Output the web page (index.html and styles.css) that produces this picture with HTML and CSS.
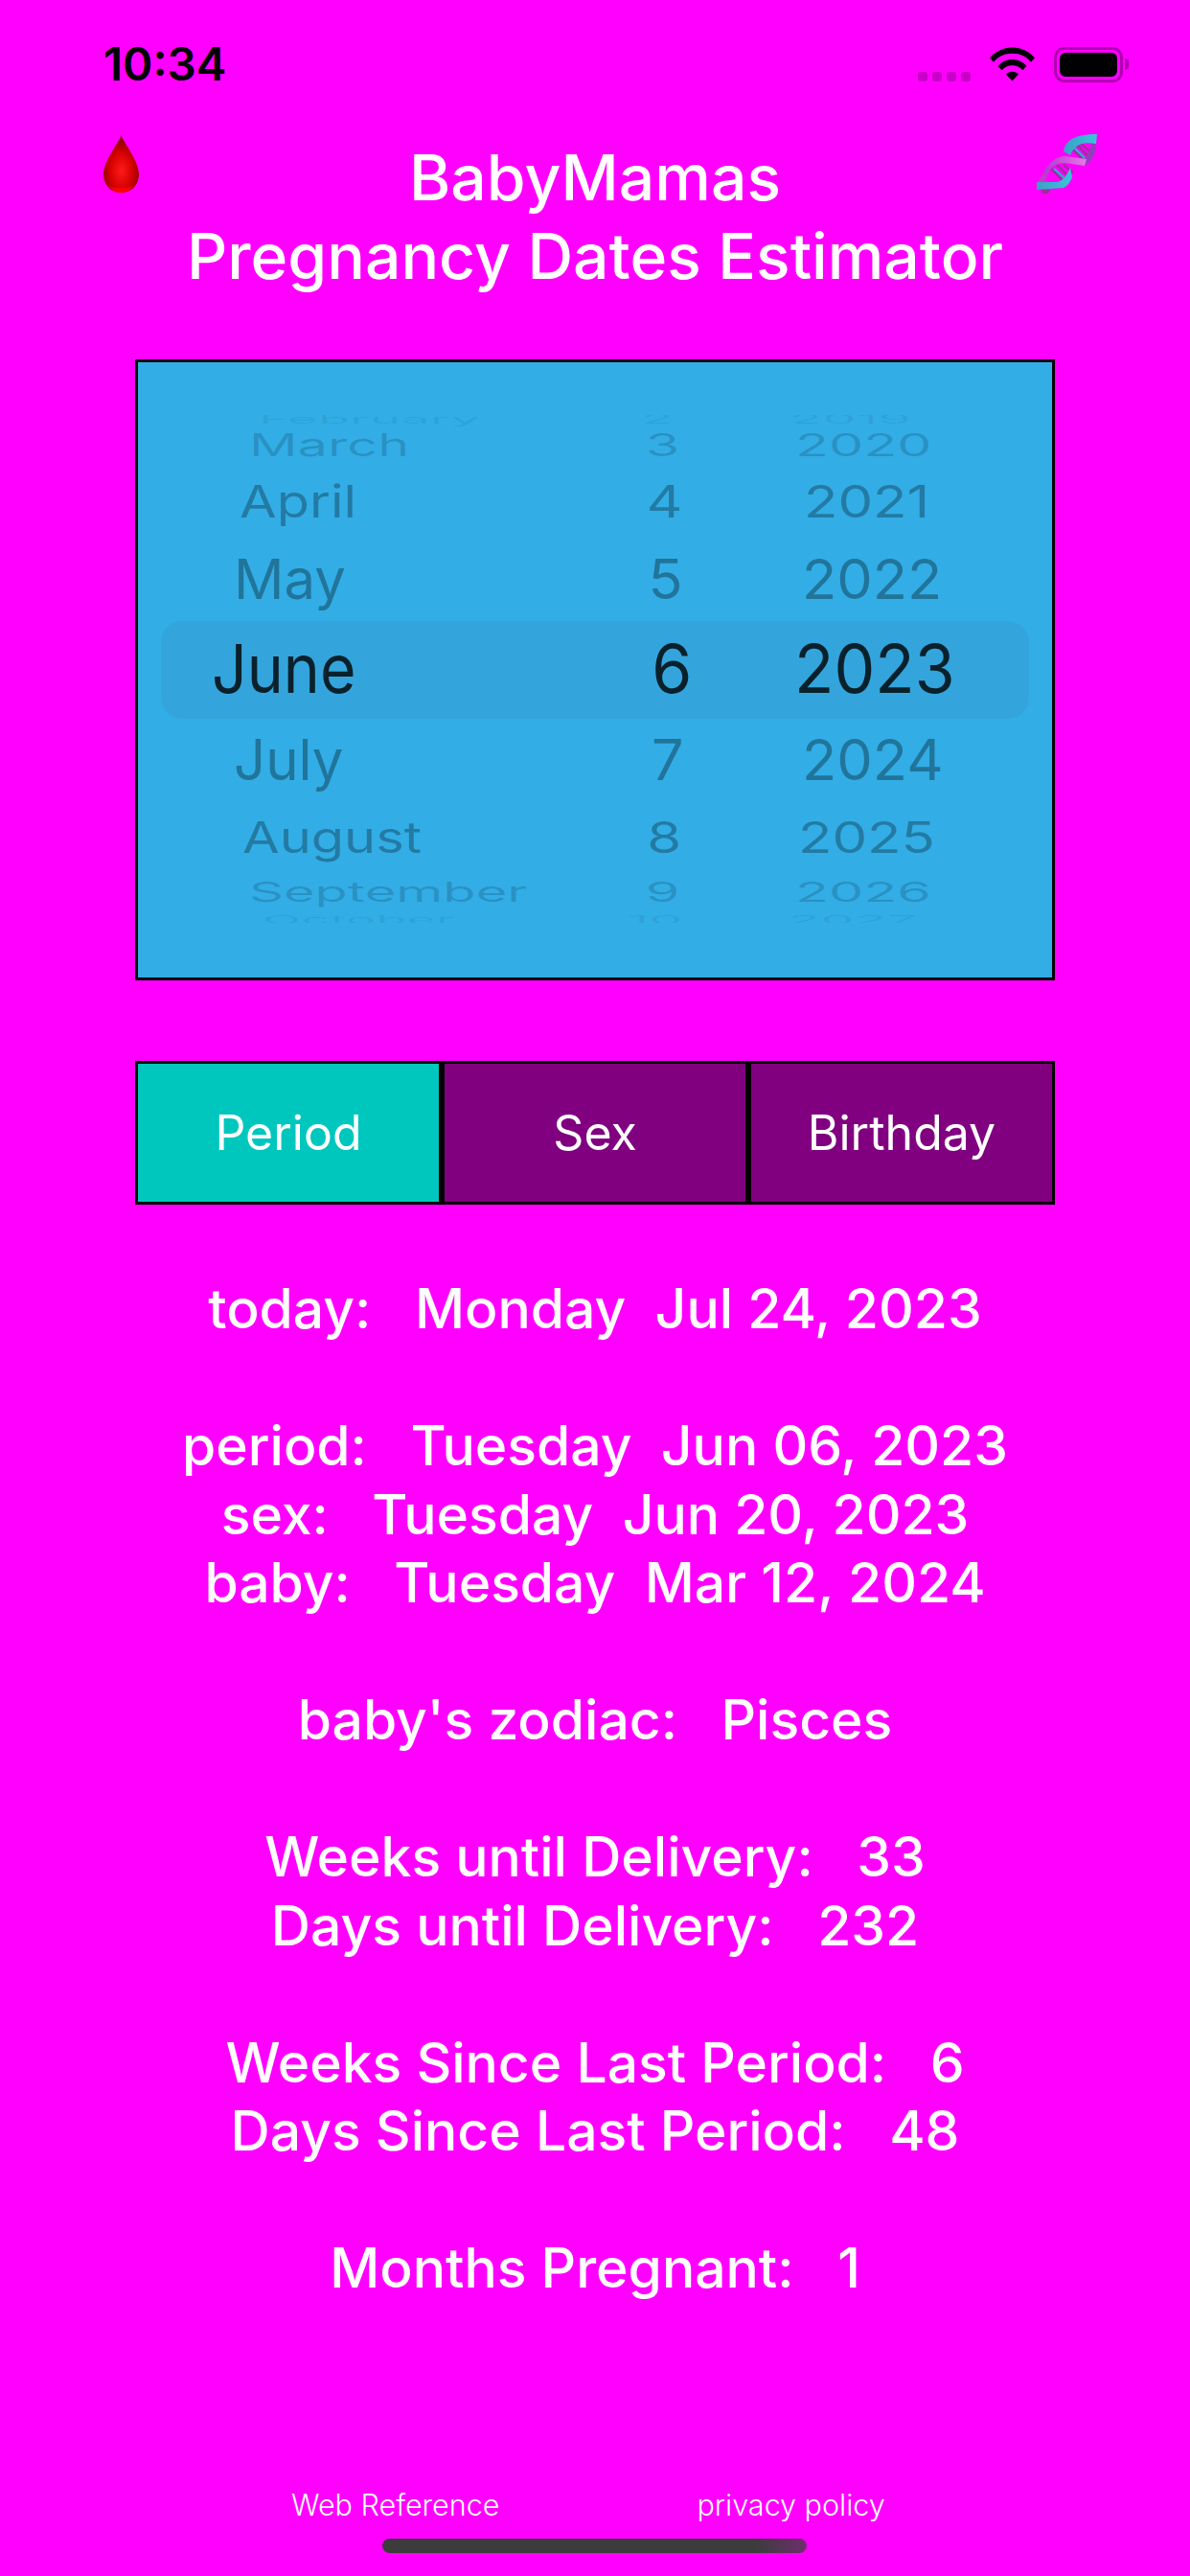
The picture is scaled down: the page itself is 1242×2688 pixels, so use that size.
FILE: index.html
```html
<!DOCTYPE html>
<html lang="en">
<head>
	<meta charset="UTF-8">
	<title>BabyMamas</title>
	<link rel="stylesheet" href="styles.css">
</head>
<body>
	<div class="page">
		<div class="statusbar">
			<span class="clock">10:34</span>
			<div class="status-icons">
				<div class="signal"><i></i><i></i><i></i><i></i></div>
				<svg class="wifi" width="47" height="36" viewBox="0 0 47 36">
					<path d="M0 11.5C6 4.5 14 0.5 23.5 0.5S41 4.5 47 11.5L43 15.7C38 10 31.500 6.800 23.500 6.800S9 10 4 15.700Z"/>
					<path d="M8.500 20C12.500 15.500 17.500 13 23.500 13S34.500 15.500 38.500 20L34.300 24.300C31.300 21 27.800 19.300 23.500 19.300S15.700 21 12.700 24.300Z"/>
					<path d="M17 28.500C18.800 26.700 21 25.700 23.500 25.700S28.200 26.700 30 28.500L23.500 35.500Z"/>
				</svg>
				<div class="battery"><div class="battery-fill"></div></div>
				<div class="battery-nub"></div>
			</div>
		</div>

		<div class="header">
			<svg class="drop" width="37" height="60" viewBox="0 0 37 60">
				<defs>
					<radialGradient id="dropfill" cx="50%" cy="62%" r="55%">
						<stop offset="0" stop-color="#ff1a1a"/>
						<stop offset="0.6" stop-color="#d40000"/>
						<stop offset="1" stop-color="#8a0000"/>
					</radialGradient>
				</defs>
				<path d="M18.500 0C21 8 37 27 37 41C37 52 29 60 18.500 60S0 52 0 41C0 27 16 8 18.500 0Z" fill="url(#dropfill)"/>
				<path d="M6 53C10 58 14 60 18.500 60S27 58 31 53C27 56 10 56 6 53Z" fill="#ff0000"/>
			</svg>
			<h1 class="title">BabyMamas<br>Pregnancy Dates Estimator</h1>
			<svg class="dna" width="63" height="64" viewBox="0 0 63 64">
				<defs>
					<linearGradient id="ribbonblue" x1="0" y1="0" x2="1" y2="0">
						<stop offset="0" stop-color="#3a9fc4"/>
						<stop offset="1" stop-color="#38c6da"/>
					</linearGradient>
					<linearGradient id="ribbonpink" x1="0" y1="0" x2="1" y2="0">
						<stop offset="0" stop-color="#b03ad0"/>
						<stop offset="1" stop-color="#e878e4"/>
					</linearGradient>
				</defs>
				<path d="M36 16L48 28M41 12L53 24M46 12L56 20M15 38L27 50M21 34L33 46M28 34L38 42" stroke="#a02ca0" stroke-width="2.500" fill="none"/>
				<path d="M39 16L50 27M18 38L30 49" stroke="#1fb8cc" stroke-width="2" fill="none"/>
				<path d="M28 20C30 8 40 2 63 2L62 12C50 10 40 11 35 24Z" fill="url(#ribbonblue)"/>
				<path d="M57 12L62 12C62 22 58 30 50 35L43 33C50 28 56 22 57 12Z" fill="#8f3fbc"/>
				<path d="M7 42C12 32 20 25 30 25L52 28L50 35L30 32C20 32 14 36 11 46Z" fill="url(#ribbonpink)"/>
				<path d="M0 52L22 52C28 50 32 44 35 37L37 47C35 52 32 56 28 58L0 60Z" fill="url(#ribbonblue)"/>
				<path d="M7 42L11 46L8 52L2 52C3 48 5 45 7 42Z" fill="#c23bc9"/>
				<path d="M4 60L14 60L12 64L6 64Z" fill="#a12aa0"/>
			</svg>
		</div>

		<div class="picker">
			<div class="picker-band"></div>
			<div class="wheel">
				<div class="wheel-row row-feb"><div class="cell-month"><span>February</span></div><div class="cell-day"><span>2</span></div><div class="cell-year"><span>2019</span></div></div>
				<div class="wheel-row row-mar"><div class="cell-month"><span>March</span></div><div class="cell-day"><span>3</span></div><div class="cell-year"><span>2020</span></div></div>
				<div class="wheel-row row-apr"><div class="cell-month"><span>April</span></div><div class="cell-day"><span>4</span></div><div class="cell-year"><span>2021</span></div></div>
				<div class="wheel-row row-may"><div class="cell-month"><span>May</span></div><div class="cell-day"><span>5</span></div><div class="cell-year"><span>2022</span></div></div>
				<div class="wheel-row row-jun"><div class="cell-month"><span>June</span></div><div class="cell-day"><span>6</span></div><div class="cell-year"><span>2023</span></div></div>
				<div class="wheel-row row-jul"><div class="cell-month"><span>July</span></div><div class="cell-day"><span>7</span></div><div class="cell-year"><span>2024</span></div></div>
				<div class="wheel-row row-aug"><div class="cell-month"><span>August</span></div><div class="cell-day"><span>8</span></div><div class="cell-year"><span>2025</span></div></div>
				<div class="wheel-row row-sep"><div class="cell-month"><span>September</span></div><div class="cell-day"><span>9</span></div><div class="cell-year"><span>2026</span></div></div>
				<div class="wheel-row row-oct"><div class="cell-month"><span>October</span></div><div class="cell-day"><span>10</span></div><div class="cell-year"><span>2027</span></div></div>
			</div>
		</div>

		<div class="tabs">
			<div class="tab tab-active">Period</div>
			<div class="tab">Sex</div>
			<div class="tab">Birthday</div>
		</div>

		<div class="info">today:   Monday  Jul 24, 2023

period:   Tuesday  Jun 06, 2023
sex:   Tuesday  Jun 20, 2023
baby:   Tuesday  Mar 12, 2024

baby's zodiac:   Pisces

Weeks until Delivery:   33
Days until Delivery:   232

Weeks Since Last Period:   6
Days Since Last Period:   48

Months Pregnant:   1</div>

		<div class="links">
			<a class="link">Web Reference</a>
			<a class="link">privacy policy</a>
		</div>
		<div class="homebar"></div>
	</div>
</body>
</html>
```

FILE: styles.css
```css
* {
	padding: 0;
	margin: 0;
	box-sizing: border-box;
}
body {
	background-color: #f0f;
	color: #fff;
	font-family: "Inter", "Liberation Sans", sans-serif;
}
.page {
	width: 1242px;
	height: 2688px;
	overflow: hidden;
}

/* status bar */
.statusbar {
	display: flex;
	justify-content: space-between;
	height: 138px;
	padding: 0 64px 0 108px;
}
.clock {
	margin-top: 39px;
	font-size: 47.5px;
	line-height: 56px;
	font-weight: 600;
	color: #000;
}
.status-icons {
	display: flex;
	align-items: flex-start;
	padding-top: 49px;
}
.signal {
	display: flex;
	gap: 5px;
	margin: 26px 20px 0 0;
}
.signal i {
	width: 10px;
	height: 10px;
	border-radius: 3px;
	background-color: #c800c8;
}
.wifi {
	margin-right: 20px;
}
.battery {
	width: 72px;
	height: 37px;
	padding: 3px;
	border: 3px solid #b000b0;
	border-radius: 11px;
}
.battery-fill {
	height: 100%;
	border-radius: 6px;
	background-color: #000;
}
.battery-nub {
	width: 4px;
	height: 12px;
	margin: 12px 0 0 2px;
	border-radius: 0 6px 6px 0;
	background-color: #b000b0;
}

/* header */
.header {
	display: grid;
	grid-template-columns: 1fr auto 1fr;
	height: 155px;
	padding: 0 97px;
	align-items: start;
}
.drop {
	margin: 3px 0 0 11px;
}
.dna {
	justify-self: end;
}
.title {
	margin-top: 6px;
	font-size: 66px;
	line-height: 82px;
	font-weight: 500;
	text-align: center;
	white-space: nowrap;
}

/* date wheel */
.picker {
	position: relative;
	width: 960px;
	height: 648px;
	margin: 82px auto 0;
	padding-top: 55px;
	border: 3px solid #000;
	background-color: #32ade6;
}
.picker-band {
	position: absolute;
	top: 270px;
	left: 24px;
	right: 24px;
	height: 102px;
	border-radius: 22px;
	background-color: #33a5dc;
}
.wheel {
	position: relative;
	display: flex;
	flex-direction: column;
	height: 530px;
	overflow: hidden;
	color: #000;
}
.wheel-row {
	flex: none;
	display: grid;
	grid-template-columns: 496px 90px 1fr;
	grid-template-rows: minmax(0, 1fr);
	align-items: center;
	font-size: 70px;
	line-height: 84px;
	white-space: nowrap;
}
.wheel-row span {
	display: inline-block;
}
.cell-month {
	padding-left: var(--mx);
}
.cell-month span {
	transform: scale(var(--sx), var(--sy));
	transform-origin: left center;
}
.cell-year span {
	transform: scale(var(--yx), var(--sy));
	transform-origin: left center;
}
.cell-day {
	padding-right: var(--dp);
	text-align: right;
}
.cell-day span {
	transform: scale(var(--yx), var(--sy));
	transform-origin: right center;
}
.cell-year {
	padding-left: var(--yp);
}
.row-feb { height: 8px;  --sx: .78; --yx: .8;  --sy: .18; --mx: 126px; --dp: 27px; --yp: 94px;  color: rgba(0,0,0,.06); }
.row-mar { height: 48px; --sx: .8;  --yx: .82; --sy: .46; --mx: 116px; --dp: 21px; --yp: 100px; color: rgba(0,0,0,.16); }
.row-apr { height: 68px; --sx: .8;  --yx: .83; --sy: .67; --mx: 106px; --dp: 18px; --yp: 109px; color: rgba(0,0,0,.29); }
.row-may { height: 94px; --sx: .83; --yx: .85; --sy: .83; --mx: 100px; --dp: 17px; --yp: 107px; color: rgba(0,0,0,.33); }
.row-jun { height: 94px; --sx: .92; --yx: .97; --sy: 1;   --mx: 77px;  --dp: 8px;  --yp: 99px;  color: rgba(0,0,0,.8); }
.row-jul { height: 96px; --sx: .83; --yx: .85; --sy: .84; --mx: 100px; --dp: 16px; --yp: 107px; color: rgba(0,0,0,.33); }
.row-aug { height: 66px; --sx: .8;  --yx: .83; --sy: .64; --mx: 109px; --dp: 19px; --yp: 103px; color: rgba(0,0,0,.29); }
.row-sep { height: 48px; --sx: .8;  --yx: .82; --sy: .4;  --mx: 116px; --dp: 21px; --yp: 100px; color: rgba(0,0,0,.16); }
.row-oct { height: 10px; --sx: .75; --yx: .8;  --sy: .16; --mx: 130px; --dp: 27px; --yp: 92px;  color: rgba(0,0,0,.06); }

/* period / sex / birthday */
.tabs {
	display: flex;
	justify-content: center;
	margin-top: 84px;
}
.tab {
	display: flex;
	align-items: center;
	justify-content: center;
	width: 320px;
	height: 150px;
	border: 3px solid #000;
	background-color: #800080;
	font-size: 50px;
}
.tab-active {
	background-color: #00c7be;
}

/* results */
.info {
	margin-top: 73px;
	font-size: 57px;
	line-height: 71.5px;
	font-weight: 500;
	text-align: center;
	white-space: pre;
}

/* footer */
.links {
	display: flex;
	gap: 206px;
	margin-top: 193px;
	padding-left: 304px;
}
.link {
	font-size: 30.5px;
	line-height: 36px;
	font-weight: 300;
}
.homebar {
	width: 443px;
	height: 15px;
	margin: 17px 0 0 399px;
	border-radius: 8px;
	background: linear-gradient(90deg, #3c3c3c 88%, #6e2f6e);
}
```
